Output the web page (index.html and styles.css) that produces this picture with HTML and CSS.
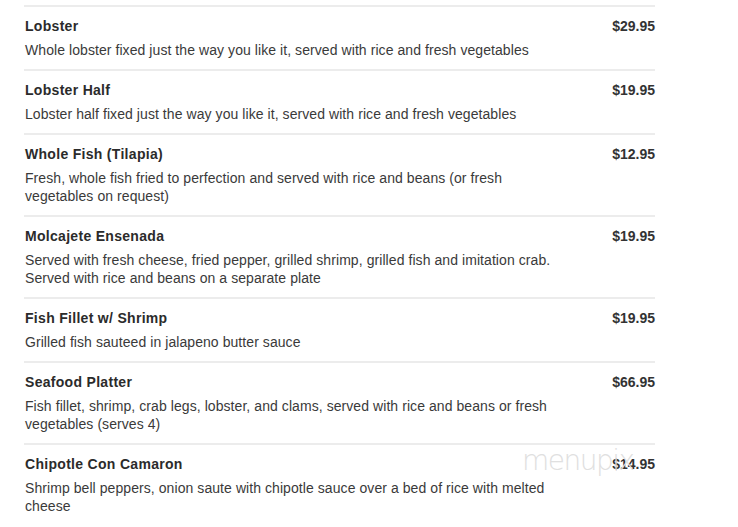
FILE: index.html
```html
<!DOCTYPE html>
<html>
<head>
<meta charset="utf-8">
<link rel="stylesheet" href="styles.css">
</head>
<body>
<div class="menu">
  <div class="item">
    <div class="head"><span class="name">Lobster</span><span class="price">$29.95</span></div>
    <div class="desc">Whole lobster fixed just the way you like it, served with rice and fresh vegetables</div>
  </div>
  <div class="item">
    <div class="head"><span class="name">Lobster Half</span><span class="price">$19.95</span></div>
    <div class="desc">Lobster half fixed just the way you like it, served with rice and fresh vegetables</div>
  </div>
  <div class="item">
    <div class="head"><span class="name">Whole Fish (Tilapia)</span><span class="price">$12.95</span></div>
    <div class="desc">Fresh, whole fish fried to perfection and served with rice and beans (or fresh vegetables on request)</div>
  </div>
  <div class="item">
    <div class="head"><span class="name">Molcajete Ensenada</span><span class="price">$19.95</span></div>
    <div class="desc">Served with fresh cheese, fried pepper, grilled shrimp, grilled fish and imitation crab. Served with rice and beans on a separate plate</div>
  </div>
  <div class="item">
    <div class="head"><span class="name">Fish Fillet w/ Shrimp</span><span class="price">$19.95</span></div>
    <div class="desc">Grilled fish sauteed in jalapeno butter sauce</div>
  </div>
  <div class="item">
    <div class="head"><span class="name">Seafood Platter</span><span class="price">$66.95</span></div>
    <div class="desc">Fish fillet, shrimp, crab legs, lobster, and clams, served with rice and beans or fresh vegetables (serves 4)</div>
  </div>
  <div class="item">
    <div class="head"><span class="name">Chipotle Con Camaron</span><span class="price">$14.95</span></div>
    <div class="desc">Shrimp bell peppers, onion saute with chipotle sauce over a bed of rice with melted cheese</div>
  </div>
</div>
<div class="watermark">menupix</div>
</body>
</html>
```
FILE: styles.css
```css
html, body {
  margin: 0;
  padding: 0;
  background: #fff;
}
body {
  font-family: "Liberation Sans", Arial, sans-serif;
  color: #333;
  position: relative;
  height: 527px;
  overflow: hidden;
}
.menu {
  width: 631px;
  margin-left: 24px;
  padding-top: 5px;
}
.item {
  border-top: 2px solid #ececec;
  padding: 10px 0 10px 1px;
}
.head {
  display: flex;
  justify-content: space-between;
  align-items: baseline;
  line-height: 18px;
}
.name {
  font-weight: bold;
  font-size: 14px;
  letter-spacing: 0.3px;
  color: #2b2b2b;
}
.price {
  font-weight: bold;
  font-size: 14px;
  color: #333;
}
.desc {
  margin-top: 6px;
  font-size: 14px;
  line-height: 18px;
  letter-spacing: 0.07px;
  color: #3a3a3a;
  width: 545px;
}
.watermark {
  position: absolute;
  left: 522px;
  top: 444px;
  font-family: "DejaVu Sans", sans-serif;
  font-weight: 200;
  font-size: 28px;
  letter-spacing: -1.5px;
  color: #e0e0e0;
}
```
